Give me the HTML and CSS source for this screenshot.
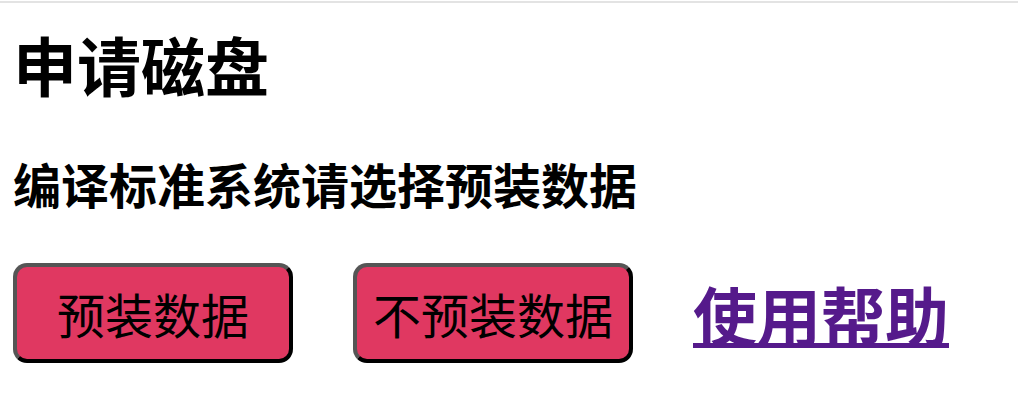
FILE: index.html
```html
<!DOCTYPE html>
<html lang="zh-CN">
<head>
<meta charset="utf-8">
<title>申请磁盘</title>
<link rel="stylesheet" href="styles.css">
</head>
<body>
<div class="topbar"></div>
<main class="page">
  <h1 class="title">申请磁盘</h1>
  <h2 class="subtitle">编译标准系统请选择预装数据</h2>
  <div class="actions">
    <button class="btn" type="button">预装数据</button>
    <button class="btn" type="button">不预装数据</button>
    <a class="help" href="#">使用帮助</a>
  </div>
</main>
</body>
</html>
```
FILE: styles.css
```css
html, body {
  margin: 0;
  padding: 0;
  background: #fff;
}
body {
  font-family: "Noto Sans CJK SC", "Noto Sans", sans-serif;
  color: #000;
}
.topbar {
  margin-top: 1px;
  height: 2px;
  background: #e3e3e3;
}
.page {
  padding: 0 0 0 13px;
}
.title {
  margin: 0;
  padding-top: 20px;
  font-size: 64px;
  line-height: 80px;
  font-weight: 700;
}
.subtitle {
  margin: 0;
  padding-top: 48px;
  font-size: 48px;
  line-height: 64px;
  font-weight: 700;
}
.actions {
  display: flex;
  align-items: center;
  gap: 60px;
  margin-top: 48px;
}
.btn {
  box-sizing: border-box;
  width: 280px;
  height: 100px;
  padding: 0;
  background: #e03861;
  color: #000;
  font-family: "Noto Sans CJK SC", "Noto Sans", sans-serif;
  font-size: 48px;
  border: 4px solid;
  border-color: #555 #000 #000 #555;
  border-radius: 14px;
}
.help {
  font-size: 64px;
  font-weight: 700;
  color: #551a8b;
  text-decoration: underline;
  text-decoration-thickness: 5px;
  text-underline-offset: 2px;
}
```
